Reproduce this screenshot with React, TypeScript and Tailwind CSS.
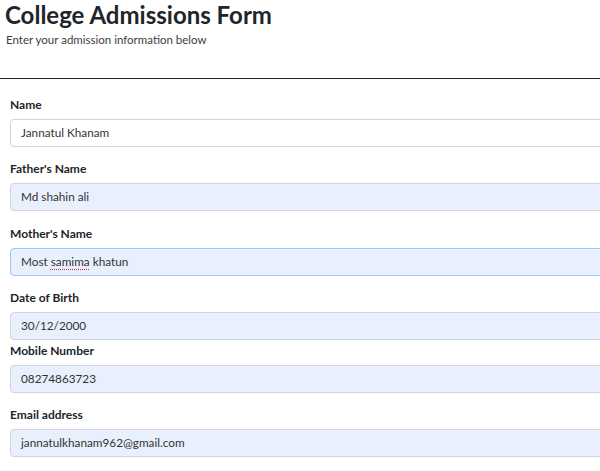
import React from 'react'

interface Field {
  label: string
  value: string
  filled?: boolean
  focused?: boolean
  gapAfter: string
}

const fields: Field[] = [
  { label: 'Name', value: 'Jannatul Khanam', gapAfter: 'mb-[14px]' },
  { label: "Father's Name", value: 'Md shahin ali', filled: true, gapAfter: 'mb-[15px]' },
  { label: "Mother's Name", value: 'Most samima khatun', filled: true, focused: true, gapAfter: 'mb-[14px]' },
  { label: 'Date of Birth', value: '30/12/2000', filled: true, gapAfter: 'mb-[3px]' },
  { label: 'Mobile Number', value: '08274863723', filled: true, gapAfter: 'mb-[14px]' },
  { label: 'Email address', value: 'jannatulkhanam962@gmail.com', filled: true, gapAfter: 'mb-[14px]' },
]

function FormField({ field }: { field: Field }) {
  const boxClasses = [
    'h-[28px] w-[640px] rounded-[4px] border pl-[10px] flex items-center text-[11.75px] text-[#333]',
    field.filled ? 'bg-[#e8f0fe]' : 'bg-white',
    field.focused ? 'border-[#9ec5fe]' : 'border-[#ced4da]',
  ].join(' ')

  return (
    <div className={field.gapAfter}>
      <div className="h-[15px] leading-[15px] text-[12px] font-bold text-[#212529] mb-[7px]">{field.label}</div>
      <div className={boxClasses}>
        {field.focused ? (
          // the spellchecker squiggle under "samima"
          <span>
            Most{' '}
            <span className="underline decoration-dotted decoration-[#e0306a] underline-offset-[3px]">samima</span>{' '}
            khatun
          </span>
        ) : (
          <span>{field.value}</span>
        )}
      </div>
    </div>
  )
}

export default function App() {
  return (
    <div className="w-[600px] h-[471px] overflow-hidden bg-white font-['Lato',sans-serif]">
      <div className="pl-[5px] pt-[1px]">
        <h1 className="text-[24px] leading-[28px] font-bold text-[#212529]">College Admissions Form</h1>
        <p className="mt-[3px] pl-[1px] text-[11.5px] leading-[16px] text-[#3d3d3d]">Enter your admission information below</p>
      </div>
      <hr className="mt-[30px] border-0 border-t border-[#222]" />
      <form className="pl-[10px] pt-[18px]">
        {fields.map((f) => (
          <FormField key={f.label} field={f} />
        ))}
      </form>
    </div>
  )
}
